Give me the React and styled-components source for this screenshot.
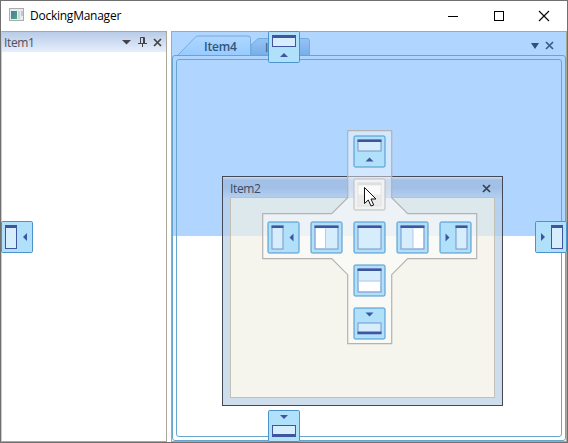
import React from "react";
import styled, { createGlobalStyle } from "styled-components";

const Global = createGlobalStyle`
  * { box-sizing: border-box; }
  body { margin: 0; overflow: hidden; background: #fff; }
`;
const Window = styled.div`
  position: relative;
  width: 568px;
  height: 443px;
  display: flex;
  flex-direction: column;
  border: 1px solid #707070;
  background: #fff;
  font-family: "Open Sans", "Noto Sans", sans-serif;
  font-size: 12px;
  overflow: hidden;
`;
const TitleBar = styled.header`
  flex: 0 0 30px;
  display: flex;
  align-items: center;
  padding-left: 8px;
  color: #000;
`;
const Title = styled.span`
  flex: 1;
  margin-left: 6px;
  line-height: 30px;
  letter-spacing: -0.25px;
`;
const Workspace = styled.main`
  flex: 1;
  display: flex;
  gap: 4px;
`;
const SidePanel = styled.section`
  width: 166px;
  border: 1px solid #aca899;
  border-left-color: #cfcbc0;
`;
const PanelHeader = styled.div`
  height: 20px;
  display: flex;
  align-items: center;
  padding: 0 4px 0 2px;
  background: linear-gradient(#b8cbe7, #e6effd);
  color: #505058;
`;
const Caption = styled.span`
  flex: 1;
  line-height: 20px;
  letter-spacing: -0.35px;
  padding-top: ${(p) => p.$drop || 0}px;
`;
const DocumentPanel = styled.section`
  flex: 1;
  display: flex;
  flex-direction: column;
  border: 1px solid #aca899;
  background: linear-gradient(#b0d6ff 204px, #fff 204px);
`;
const TabStrip = styled.div`
  height: 23px;
  display: flex;
  align-items: flex-end;
  padding-left: 6px;
`;
const Tab = styled.div`
  position: relative;
  width: ${(p) => p.$width}px;
  height: 20px;
  padding-left: ${(p) => p.$indent}px;
  line-height: ${(p) => (p.$active ? 23 : 26)}px;
  font-size: 12px;
  font-weight: ${(p) => (p.$active ? 600 : 400)};
  letter-spacing: -0.2px;
  color: #305878;
`;
const TabShape = styled.svg`
  position: absolute;
  inset: 0;
  display: block;
`;
const TabText = styled.span`
  position: relative;
`;
const StripTools = styled.div`
  flex: 1;
  height: 23px;
  display: flex;
  justify-content: flex-end;
  align-items: center;
  padding: 4px 12px 0 0;
`;
const OuterFrame = styled.div`
  flex: 1;
  padding: 3px;
  border: 1px solid #67a5cf;
  border-radius: 3px;
`;
const InnerFrame = styled.div`
  height: 100%;
  border: 1px solid #67a5cf;
  border-radius: 3px;
`;
const FloatWindow = styled.section`
  position: absolute;
  left: 221px;
  top: 175px;
  width: 281px;
  height: 230px;
  display: flex;
  flex-direction: column;
  padding: 0 7px 7px;
  border: 1px solid #444a55;
  background: linear-gradient(#c9dcf8 0, #a3bfe5 3px, #a2c0e7 11px, #b6d1f1 22px, #b6d2ee 59px, #cdddec 59px);
`;
const FloatHeader = styled.div`
  height: 20px;
  display: flex;
  align-items: center;
  padding: 3px 4px 0 0;
  color: #3c4c60;
`;
const FloatBody = styled.div`
  flex: 1;
  border: 1px solid #c3c0b5;
  background: linear-gradient(#dde8ed 38px, #f5f4ed 38px);
`;
const Compass = styled.div`
  position: absolute;
  left: 261px;
  top: 129px;
  width: 216px;
  height: 216px;
  display: grid;
  grid-template: repeat(5, 43px) / repeat(5, 43px);
  padding: 5px 0 0 5px;
`;
const CompassShape = styled.svg`
  position: absolute;
  inset: 0;
`;
const Cell = styled.div`
  position: relative;
  grid-column: ${(p) => p.$col};
  grid-row: ${(p) => p.$row};
`;
const EdgeTarget = styled.div`
  position: absolute;
  left: ${(p) => p.$x}px;
  top: ${(p) => p.$y}px;
`;
const Drawing = styled.svg`
  display: block;
  overflow: visible;
  flex: none;
`;
const AppIcon = styled(Drawing)`
  position: relative;
  top: -1px;
`;
const Cursor = styled(Drawing)`
  position: absolute;
  left: 363px;
  top: 186px;
`;

const frames = {
  top: [4, 4, 24, 12],
  bottom: [4, 15, 24, 12],
  left: [4, 4, 12, 24],
  right: [16, 4, 12, 24],
};
const arrows = {
  top: "M12 26L16 22L20 26Z",
  bottom: "M12 5H20L16 9Z",
  left: "M26 12V20L22 16Z",
  right: "M6 12V20L10 16Z",
};
const splits = {
  splitLeft: [5.5, 7, 9.5, 19.5],
  splitRight: [16.5, 7, 10, 19.5],
  splitBottom: [5.5, 17, 21, 9.5],
};

function DockGlyph({ side, soft, hot }) {
  const [x, y, w, h] = frames[side] || [4, 4, 24, 24];
  const split = splits[side];
  const line = hot ? "#e2e2e3" : soft ? "#7894cc" : "#4055a0";
  return (
    <Drawing width={soft ? 33 : 32} height={soft ? 33 : 32}>
      <g transform={soft ? "translate(.5 .5)" : undefined}>
        <rect x=".5" y=".5" width="31" height="31" rx="1.2"
          fill={hot ? "#f2f2f2" : "#b1e0fa"} stroke={hot ? "#bcbcbc" : "#4a94cb"} />
        <rect x={x + 0.5} y={y + 0.5} width={w - 1} height={h - 1}
          fill={hot ? "#ebebeb" : "#d6eefc"} stroke={line} />
        {hot && <rect x="5" y="7" width="22" height="9" fill="#fafafa" />}
        {split && <rect x={split[0]} y={split[1]} width={split[2]} height={split[3]} fill="#fff" />}
        {side === "splitLeft" && <path d="M15 7V27" stroke="#b7c9eb" />}
        {side === "splitRight" && <path d="M16.5 7V27" stroke="#b7c9eb" />}
        {side === "splitBottom" && <path d="M5 16.5H27" stroke="#b7c9eb" />}
        <rect x={x} y={side === "bottom" ? y + h - 3 : y} width={w} height={soft ? 2.5 : 3}
          fill={hot ? "#dedfe0" : "#4055a0"} />
        {arrows[side] && <path d={arrows[side]} fill="#4055a0" />}
      </g>
    </Drawing>
  );
}

const CloseGlyph = ({ color }) => (
  <Drawing width="9" height="9"><path d="M1 1L8 8M8 1L1 8" stroke={color} strokeWidth="1.7" /></Drawing>
);
const CaptionButtons = styled.div`
  display: flex;
  height: 28px;
  align-items: center;
  gap: 35.5px;
  padding-right: 18px;
`;
const PanelTools = styled.div`
  display: flex;
  align-items: center;
  gap: ${(p) => p.$gap || 6}px;
`;
const cells = [
  [3, 1, "top"], [3, 2, "splitTop"], [1, 3, "left"], [2, 3, "splitLeft"], [3, 3, "fill"],
  [4, 3, "splitRight"], [5, 3, "right"], [3, 4, "splitBottom"], [3, 5, "bottom"],
];
const edges = [[267, 30, "top"], [0, 220, "left"], [534, 220, "right"], [267, 409, "bottom"]];

export default function App() {
  return (
    <>
      <Global />
      <Window>
        <TitleBar>
          <AppIcon width="15" height="14">
            <defs>
              <linearGradient id="app" x2="1" y2="1"><stop stopColor="#4c78b0" /><stop offset="1" stopColor="#48a878" /></linearGradient>
            </defs>
            <rect x=".5" y=".5" width="14" height="12" fill="#e8eced" stroke="#a8adb1" />
            <rect x="2" y="3" width="6" height="8" fill="url(#app)" />
            <rect x="9" y="3" width="2" height="8" fill="#d0d5d9" />
            <rect x="12" y="3" width="2" height="5" fill="#b9cad6" />
          </AppIcon>
          <Title>DockingManager</Title>
          <CaptionButtons>
            <Drawing width="10" height="10"><path d="M0 5.5H10" stroke="#000" /></Drawing>
            <Drawing width="10" height="10"><rect x=".5" y=".5" width="9" height="9" fill="none" stroke="#000" /></Drawing>
            <Drawing width="10" height="10"><path d="M0 0L10 10M10 0L0 10" stroke="#000" strokeWidth="1.1" /></Drawing>
          </CaptionButtons>
        </TitleBar>
        <Workspace>
          <SidePanel>
            <PanelHeader>
              <Caption $drop={2}>Item1</Caption>
              <PanelTools $gap={6.5}>
                <Drawing width="9" height="5"><path d="M0 0H9L4.5 4.5Z" fill="#444" /></Drawing>
                <Drawing width="9" height="10"><path d="M2.5 6V.5H6.5V6M5.5 0V6M0 6.5H9M4.5 6V10" fill="none" stroke="#444" /></Drawing>
                <CloseGlyph color="#444" />
              </PanelTools>
            </PanelHeader>
          </SidePanel>
          <DocumentPanel>
            <TabStrip>
              <Tab $width={73} $indent={26} $active>
                <TabShape width="73" height="20">
                  <defs>
                    <linearGradient id="tabA" x2="0" y2="1"><stop stopColor="#b0d6ff" /><stop offset="1" stopColor="#98cbff" /></linearGradient>
                    <linearGradient id="tabB" x2="0" y2="1"><stop stopColor="#96c3f5" /><stop offset="1" stopColor="#78afe9" /></linearGradient>
                  </defs>
                  <path d="M0 20L17 2.500Q18.500 1 20 1H70Q72.500 1 72.500 3.500V20" fill="url(#tabA)" stroke="#70acdf" />
                </TabShape>
                <TabText>Item4</TabText>
              </Tab>
              <Tab $width={60} $indent={14}>
                <TabShape width="60" height="20">
                  <path d="M0 20V10L6 4.500Q7 3.500 8 3.500H56Q58.500 3.500 58.500 6V20" fill="url(#tabB)" stroke="#70acdf" />
                </TabShape>
                <TabText>Item3</TabText>
              </Tab>
              <StripTools>
                <PanelTools>
                  <Drawing width="8" height="6"><path d="M0 0H8L4 6Z" fill="#285480" /></Drawing>
                  <CloseGlyph color="#365f88" />
                </PanelTools>
              </StripTools>
            </TabStrip>
            <OuterFrame><InnerFrame /></OuterFrame>
          </DocumentPanel>
        </Workspace>
        <FloatWindow>
          <FloatHeader>
            <Caption>Item2</Caption>
            <CloseGlyph color="#35414f" />
          </FloatHeader>
          <FloatBody />
        </FloatWindow>
        <Compass>
          <CompassShape width="216" height="216">
            <path d="M85.500 .5H129.500V67.500L145.500 83.500H214.500V128.500H145.500L129.500 144.500V213.500H85.500V144.500L69.500 128.500H.5V83.500H69.500L85.500 67.500Z"
              transform="translate(.2 .2)" fill="#fff" fillOpacity=".44" stroke="#b3b3b3" strokeWidth="1.2" />
          </CompassShape>
          {cells.map(([col, row, side]) => (
            <Cell key={side} $col={col} $row={row}>
              <DockGlyph side={side} soft hot={side === "splitTop"} />
            </Cell>
          ))}
        </Compass>
        {edges.map(([x, y, side]) => (
          <EdgeTarget key={side} $x={x} $y={y}><DockGlyph side={side} /></EdgeTarget>
        ))}
        <Cursor width="13" height="20">
          <path d="M.5 .5V16.500L4.300 13L7 19L9.700 18L7 12H12Z" fill="#fff" stroke="#111" />
        </Cursor>
      </Window>
    </>
  );
}
